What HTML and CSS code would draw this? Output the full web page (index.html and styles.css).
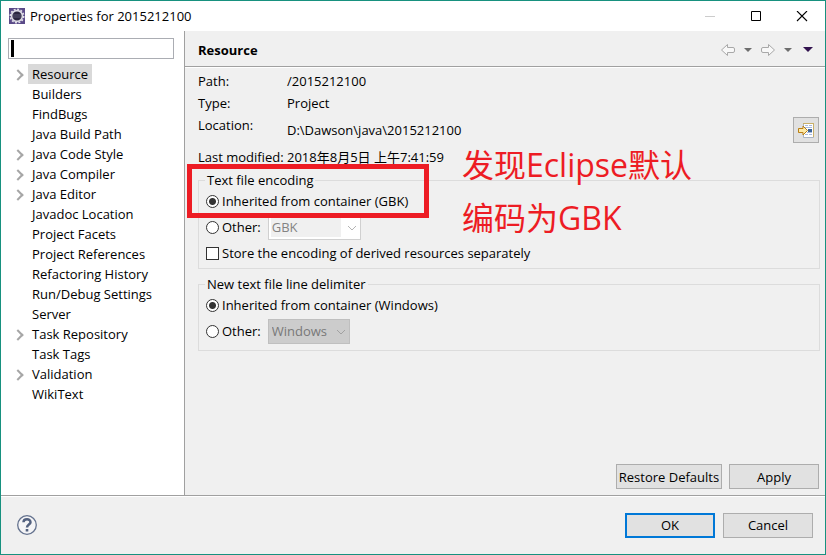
FILE: index.html
```html
<!DOCTYPE html>
<html lang="en">
<head>
<meta charset="utf-8">
<title>Properties for 2015212100</title>
<link rel="stylesheet" href="styles.css">
</head>
<body>
<div class="window">
  <header class="titlebar">
    <svg class="app-icon" width="16" height="16" viewBox="0 0 16 16" aria-hidden="true">
      <rect width="16" height="16" fill="#5a4a88"/>
      <circle cx="8" cy="8" r="6.7" fill="none" stroke="#e4e2ea" stroke-width="1.6" stroke-dasharray="2 1.5"/>
      <circle cx="8" cy="8" r="5.4" fill="#2b2640" stroke="#dcdae4" stroke-width="1.6"/>
      <path d="M4 7h8M4 9h8" stroke="#5b5672"/>
    </svg>
    <h1 class="title">Properties for 2015212100</h1>
    <div class="window-controls">
      <button class="wbtn" aria-label="Minimize"><svg width="12" height="12" viewBox="0 0 12 12"><path d="M1 5.5h10" stroke="#ccc"/></svg></button>
      <button class="wbtn" aria-label="Maximize"><svg width="12" height="12" viewBox="0 0 12 12"><path d="M1.5 .5h9v9h-9z" fill="none" stroke="#000"/></svg></button>
      <button class="wbtn" aria-label="Close"><svg width="12" height="12" viewBox="0 0 12 12"><path d="M1 0l10 10M11 0L1 10" stroke="#000" stroke-width="1.1"/></svg></button>
    </div>
  </header>

  <div class="body">
    <nav class="sidebar">
      <input class="filter" type="text" aria-label="Filter">
      <ul class="tree">
        <li class="parent"><a class="selected" href="#">Resource</a></li>
        <li><a href="#">Builders</a></li>
        <li><a href="#">FindBugs</a></li>
        <li><a href="#">Java Build Path</a></li>
        <li class="parent"><a href="#">Java Code Style</a></li>
        <li class="parent"><a href="#">Java Compiler</a></li>
        <li class="parent"><a href="#">Java Editor</a></li>
        <li><a href="#">Javadoc Location</a></li>
        <li><a href="#">Project Facets</a></li>
        <li><a href="#">Project References</a></li>
        <li><a href="#">Refactoring History</a></li>
        <li><a href="#">Run/Debug Settings</a></li>
        <li><a href="#">Server</a></li>
        <li class="parent"><a href="#">Task Repository</a></li>
        <li><a href="#">Task Tags</a></li>
        <li class="parent"><a href="#">Validation</a></li>
        <li><a href="#">WikiText</a></li>
      </ul>
    </nav>

    <main class="page">
      <div class="page-head">
        <h2 class="page-title">Resource</h2>
        <div class="history">
          <button class="hbtn" aria-label="Back"><svg width="16" height="14" viewBox="0 0 16 14"><path d="M1.500 7L7.500 1.500V4.500H13Q14.500 4.500 14.500 6V8Q14.500 9.500 13 9.500H7.500V12.500z" fill="#f8f8f8" stroke="#a8a8a8"/></svg></button>
          <button class="hbtn" aria-label="Back history"><svg width="8" height="4" viewBox="0 0 8 4"><path d="M0 0h8L4 4z" fill="#6e6e6e"/></svg></button>
          <button class="hbtn" aria-label="Forward"><svg width="16" height="14" viewBox="0 0 16 14"><path d="M14.500 7L8.500 1.500V4.500H3Q1.500 4.500 1.500 6V8Q1.500 9.500 3 9.500H8.500V12.500z" fill="#f8f8f8" stroke="#a8a8a8"/></svg></button>
          <button class="hbtn" aria-label="Forward history"><svg width="8" height="4" viewBox="0 0 8 4"><path d="M0 0h8L4 4z" fill="#6e6e6e"/></svg></button>
          <button class="hbtn" aria-label="Menu"><svg width="10" height="5" viewBox="0 0 10 5"><path d="M0 0h10L5 5z" fill="#32134f"/></svg></button>
        </div>
      </div>

      <form class="content">
        <dl class="info">
          <dt>Path:</dt><dd>/2015212100</dd>
          <dt>Type:</dt><dd>Project</dd>
          <dt>Location:</dt>
          <dd class="location"><span>D:\Dawson\java\2015212100</span>
            <button type="button" class="show" aria-label="Show In System Explorer">
              <svg width="18" height="16" viewBox="0 0 18 16">
                <path d="M6.500 1.500h10v14h-10z" fill="#fff" stroke="#a9b4c4"/>
                <path d="M6 1.500h11M16.500 1v14" stroke="#c9b06a"/>
                <path d="M8 3.500h3M12 3.500h3M8 5.500h7M10 10.500h5M8 12.500h3M12 12.500h3" stroke="#a9bce0"/>
                <path d="M11 7h4v3h-4z" fill="#3a6296"/>
                <path d="M1.500 6.500h4.500v-2.500l4.500 4.500-4.500 4.500v-2.500H1.500z" fill="#fdeaa8" stroke="#b97e14"/>
              </svg>
            </button>
          </dd>
          <dt>Last modified:</dt><dd>2018年8月5日 上午7:41:59</dd>
        </dl>

        <fieldset class="group">
          <legend>Text file encoding</legend>
          <div class="row"><label><input type="radio" name="encoding" checked>Inherited from container (GBK)</label></div>
          <div class="row"><label><input type="radio" name="encoding">Other:</label>
            <span class="combo combo-edit"><select disabled aria-label="Encoding"><option>GBK</option></select><svg width="10" height="6" viewBox="0 0 10 6"><path d="M1 1l4 4 4-4" fill="none" stroke="#b4b4b4"/></svg></span></div>
          <div class="row"><label><input type="checkbox">Store the encoding of derived resources separately</label></div>
          <div class="highlight"></div>
          <p class="note">发现Eclipse默认<br>编码为GBK</p>
        </fieldset>

        <fieldset class="group group-last">
          <legend>New text file line delimiter</legend>
          <div class="row"><label><input type="radio" name="delimiter" checked>Inherited from container (Windows)</label></div>
          <div class="row"><label><input type="radio" name="delimiter">Other:</label>
            <span class="combo combo-list"><select disabled aria-label="Line delimiter"><option>Windows</option></select><svg width="10" height="6" viewBox="0 0 10 6"><path d="M1 1l4 4 4-4" fill="none" stroke="#a2a2a2"/></svg></span></div>
        </fieldset>

        <div class="page-actions">
          <button type="button" class="btn btn-wide">Restore Defaults</button>
          <button type="button" class="btn">Apply</button>
        </div>
      </form>
    </main>
  </div>

  <footer class="footer">
    <button class="help" aria-label="Help">
      <svg width="22" height="22" viewBox="0 0 22 22"><circle cx="11" cy="11" r="9.300" fill="#f4f4f6" stroke="#64728e" stroke-width="1.300"/><path d="M7.500 8.300C7.500 4.200 14.500 4.200 14.500 8.200C14.500 10.600 11 10.600 11 13.500" fill="none" stroke="#53617f" stroke-width="2.500"/><path d="M9.700 15h2.600v2.500H9.700z" fill="#53617f"/></svg>
    </button>
    <button class="btn btn-default">OK</button>
    <button class="btn">Cancel</button>
  </footer>
</div>
</body>
</html>
```
FILE: styles.css
```css
* { box-sizing: border-box; }

body {
  margin: 0;
  font: 13px/16px "Open Sans", "Noto Sans CJK SC", sans-serif;
  color: #000;
}

button, input, select { font: inherit; color: inherit; margin: 0; }
button { padding: 0; }
svg { display: block; }

.window {
  display: flex;
  flex-direction: column;
  min-height: 100vh;
  border: 1px solid #17917f;
  background: #f0f0f0;
}

/* Title bar */
.titlebar {
  display: flex;
  align-items: center;
  height: 30px;
  padding: 0 0 1px 8px;
  gap: 5px;
  background: #fff;
}
.title { flex: 1; margin: 0; font-size: 13px; font-weight: 400; }
.window-controls { display: flex; }
.wbtn {
  display: grid;
  place-items: center;
  width: 46px;
  height: 26px;
  padding-top: 2px;
  border: 0;
  background: none;
}

/* Two panes */
.body { display: flex; flex: 1; }
.sidebar {
  width: 184px;
  padding: 7px 10px 0 7px;
  background: #fff;
  border-right: 1px solid #a0a0a0;
}
.filter {
  display: block;
  width: 100%;
  height: 21px;
  padding: 0 4px;
  border: 1px solid #abadb3;
  outline: 0;
  background: linear-gradient(#000, #000) 2px 1px / 3px 17px no-repeat #fff;
}
.tree { margin: 5px 0 0; padding: 0; list-style: none; }
.tree li { display: flex; padding-left: 20px; position: relative; }
.tree a {
  padding: 0 4px;
  line-height: 20px;
  color: #000;
  text-decoration: none;
  white-space: nowrap;
}
.tree .selected { background: #d9d9d9; }
.parent::before {
  content: "";
  position: absolute;
  left: 6px;
  top: 7px;
  width: 6px;
  height: 6px;
  border: solid #a6a6a6;
  border-width: 2px 2px 0 0;
  transform: rotate(45deg);
}

.page { display: flex; flex: 1; flex-direction: column; }
.page-head {
  display: flex;
  align-items: center;
  justify-content: space-between;
  height: 36px;
  padding: 2px 12px 0 13px;
  border-bottom: 1px solid #a0a0a0;
  box-shadow: 0 1px #fff;
}
.page-title { margin: 0; font-size: 13px; font-weight: 700; }
.history { display: flex; align-items: center; gap: 8px; }
.hbtn { border: 0; background: none; }
.hbtn:nth-child(4) { margin-right: 3px; }

.content {
  display: flex;
  flex: 1;
  flex-direction: column;
  gap: 7px;
  padding: 6px 5px 6px 13px;
}
.info {
  display: grid;
  grid-template-columns: 89px 1fr;
  gap: 6px 0;
  margin: 0;
}
.info dt { white-space: nowrap; }
.info dd { margin: 0; }
.location { display: flex; align-items: center; justify-content: space-between; padding-right: 1px; }
.show {
  display: grid;
  place-items: center;
  width: 26px;
  height: 26px;
  border: 1px solid #adadad;
  background: #e1e1e1;
}

/* Option groups */
.group {
  position: relative;
  min-width: 0;
  margin: 0;
  padding: 0 7px 2px;
  border: 1px solid #dcdcdc;
}
.group-last { padding-bottom: 6px; }
.group legend { padding: 0 2px; margin-left: -1px; }
.row { display: flex; align-items: center; height: 26px; gap: 7px; }
.row label { display: flex; align-items: center; gap: 3px; }
.row input {
  appearance: none;
  width: 13px;
  height: 13px;
  border: 1px solid #333;
  background: #fff;
}
.row input[type="radio"] { border-radius: 50%; }
.row input[type="radio"]:checked { background: radial-gradient(circle, #333 3px, #fff 4px); }

.combo { position: relative; display: block; height: 25px; }
.combo select {
  appearance: none;
  display: block;
  width: 100%;
  height: 100%;
  padding: 0 3px;
  border: 1px solid #bfbfbf;
  border-radius: 0;
  opacity: 1;
}
.combo svg { position: absolute; right: 4px; top: 10px; }
.combo-edit { width: 93px; }
.combo-edit select {
  border-color: #d0d0d0;
  color: #838383;
  background: linear-gradient(#f0f0f0, #f0f0f0) 2px 2px / 70px 19px no-repeat #fff;
}
.combo-list { width: 82px; }
.combo-list select { color: #787878; background: #ccc; }

/* Annotation */
.highlight {
  position: absolute;
  left: -12px;
  top: -24px;
  width: 242px;
  height: 54px;
  border: 5px solid #ed1c24;
}
.note {
  position: absolute;
  left: 263px;
  top: -50px;
  margin: 0;
  font-size: 32px;
  line-height: 53px;
  color: #ed1c24;
  white-space: nowrap;
}

.page-actions { display: flex; justify-content: flex-end; gap: 7px; margin-top: auto; padding-right: 1px; }
.btn {
  width: 90px;
  height: 25px;
  border: 1px solid #adadad;
  background: #e1e1e1;
}
.btn-wide { width: 106px; }
.btn-default { border: 2px solid #0078d7; }

.footer {
  display: flex;
  align-items: center;
  gap: 8px;
  height: 59px;
  padding: 0 12px 0 15px;
  border-top: 1px solid #a0a0a0;
  box-shadow: inset 0 1px #fff;
}
.help { margin-right: auto; border: 0; background: none; }
```
